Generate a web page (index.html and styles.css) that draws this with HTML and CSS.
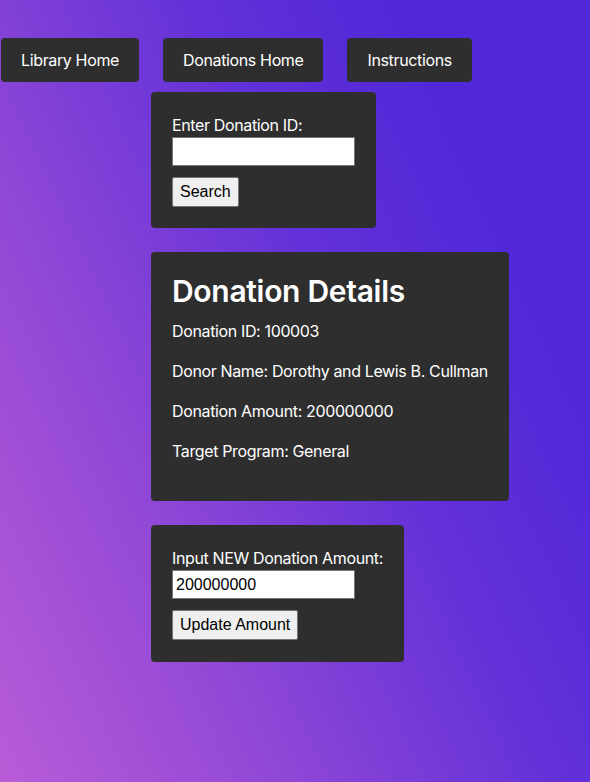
FILE: index.html
```html
<!DOCTYPE html>
<html lang="en">
<head>
<meta charset="utf-8">
<title>Donation Details</title>
<link rel="stylesheet" href="styles.css">
</head>
<body>
<nav class="nav">
  <a class="nav-btn" href="#">Library Home</a>
  <a class="nav-btn" href="#">Donations Home</a>
  <a class="nav-btn" href="#">Instructions</a>
</nav>
<main class="content">
  <form class="card">
    <label class="label" for="did">Enter Donation ID:</label>
    <input class="field" id="did" type="text">
    <button class="btn" type="button">Search</button>
  </form>
  <section class="card details">
    <h1 class="title">Donation Details</h1>
    <p class="row">Donation ID: 100003</p>
    <p class="row">Donor Name: Dorothy and Lewis B. Cullman</p>
    <p class="row">Donation Amount: 200000000</p>
    <p class="row">Target Program: General</p>
  </section>
  <form class="card">
    <label class="label" for="amt">Input NEW Donation Amount:</label>
    <input class="field" id="amt" type="text" value="200000000">
    <button class="btn" type="button">Update Amount</button>
  </form>
</main>
</body>
</html>
```
FILE: styles.css
```css
html, body {
  margin: 0;
  height: 100%;
}
body {
  background: linear-gradient(65deg, #b95cd7 0%, #8f47d6 30%, #6331d8 58%, #5228d8 78%, #5127d8 100%);
  font-family: Inter, "Noto Sans", sans-serif;
  color: #fff;
  font-size: 16px;
  letter-spacing: -0.36px;
}
.nav {
  display: flex;
  gap: 24px;
  padding: 38px 0 0 1px;
}
.nav-btn {
  display: flex;
  align-items: center;
  height: 44px;
  padding: 0 20px;
  background: #2e2e2e;
  border-radius: 4px;
  color: #fff;
  text-decoration: none;
  font-size: 16px;
  font-weight: 400;
}
.content {
  display: flex;
  flex-direction: column;
  align-items: flex-start;
  gap: 24px;
  padding: 10px 0 0 151px;
}
.card {
  display: flex;
  flex-direction: column;
  align-items: flex-start;
  background: #2e2e2e;
  border-radius: 4px;
  padding: 21px;
  margin: 0;
}
.label {
  line-height: 24px;
}
.field {
  box-sizing: border-box;
  width: 183px;
  height: 29px;
  margin: 0 0 11px;
  padding: 1px 3px;
  border: 1px solid #767676;
  background: #fff;
  font-family: "Liberation Sans", Arial, sans-serif;
  font-size: 16px;
  letter-spacing: 0;
  color: #000;
}
.btn {
  box-sizing: border-box;
  height: 30px;
  padding: 1px 7px;
  margin: 0;
  background: #efefef;
  border: 1px solid #767676;
  border-radius: 2px;
  font-family: "Liberation Sans", Arial, sans-serif;
  font-size: 16px;
  letter-spacing: 0;
  color: #000;
}
.details {
  width: 316px;
  padding-bottom: 22px;
}
.details + .card {
  padding-bottom: 22px;
}
.title {
  font-size: 30px;
  font-weight: 600;
  line-height: 36px;
  letter-spacing: -0.3px;
  margin: 0;
}
.row {
  margin: 16px 0 0;
  line-height: 24px;
}
.title + .row {
  margin-top: 10px;
}
.row:last-child {
  margin-bottom: 16px;
}
```
